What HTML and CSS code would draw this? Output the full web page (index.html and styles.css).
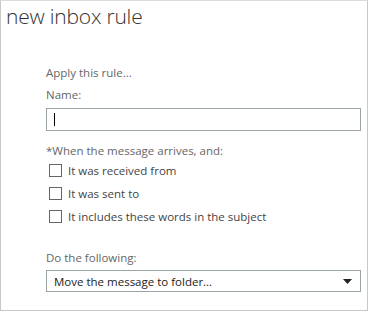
FILE: index.html
```html
<!DOCTYPE html>
<html>
<head>
<meta charset="utf-8">
<link rel="stylesheet" href="styles.css">
</head>
<body>
<div class="frame">
  <h1 class="title">new inbox rule</h1>
  <div class="form">
    <div class="label apply">Apply this rule...</div>
    <div class="label name">Name:</div>
    <div class="input"><span class="caret"></span></div>
    <div class="label when">*When the message arrives, and:</div>
    <div class="checks">
      <div class="check"><span class="box"></span><span class="ctext">It was received from</span></div>
      <div class="check"><span class="box"></span><span class="ctext">It was sent to</span></div>
      <div class="check"><span class="box"></span><span class="ctext">It includes these words in the subject</span></div>
    </div>
    <div class="label do">Do the following:</div>
    <div class="select"><span class="seltext">Move the message to folder...</span><svg class="arrow" width="9" height="5" viewBox="0 0 9 5"><path d="M0 0H9L4.5 5Z" fill="#222"/></svg></div>
  </div>
</div>
</body>
</html>
```

FILE: styles.css
```css
html, body { margin: 0; padding: 0; background: #fff; }
body { font-family: "Open Sans", "Noto Sans", sans-serif; }
.frame {
  box-sizing: border-box;
  width: 368px;
  height: 311px;
  border: 1px solid #c8c8c8;
  border-top-color: #dcdcdc;
  padding: 0 0 0 5px;
}
.title {
  margin: 0;
  font-family: "Open Sans", sans-serif;
  font-weight: 300;
  font-size: 21px;
  line-height: 30px;
  color: #333;
  letter-spacing: -0.2px;
}
.form {
  padding: 34px 0 0 40px;
  display: flex;
  flex-direction: column;
  width: 315px;
}
.label {
  font-size: 11.5px;
  line-height: 16px;
  color: #666;
}
.name { margin-top: 6px; }
.input {
  margin-top: 5px;
  box-sizing: border-box;
  height: 23px;
  border: 1px solid #9ba5a5;
  display: flex;
  align-items: center;
  padding-left: 7px;
}
.caret { width: 1px; height: 13px; background: #000; }
.when { margin-top: 12px; }
.checks { display: flex; flex-direction: column; gap: 9px; margin-top: 4px; }
.check { display: flex; align-items: center; height: 14px; }
.box {
  box-sizing: border-box;
  width: 13px; height: 13px;
  border: 1px solid #666;
  margin-left: 3px;
}
.ctext { margin-left: 6px; font-size: 11.5px; color: #444; }
.do { margin-top: 27px; }
.select {
  margin-top: 4px;
  box-sizing: border-box;
  height: 22px;
  border: 1px solid #9ba5a5;
  display: flex;
  align-items: center;
  justify-content: space-between;
  padding: 0 8px 0 7px;
}
.seltext { font-size: 11.5px; color: #222; }
.arrow { display: block; }
```
